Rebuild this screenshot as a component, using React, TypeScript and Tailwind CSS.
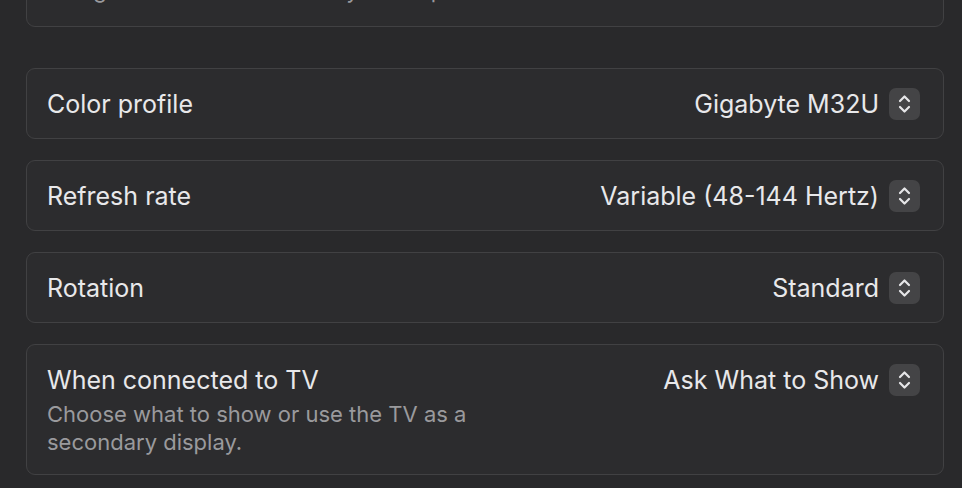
import React from "react";

type Row = {
  label: string;
  value: string;
  note?: string;
};

const rows: Row[] = [
  { label: "Color profile", value: "Gigabyte M32U" },
  { label: "Refresh rate", value: "Variable (48-144 Hertz)" },
  { label: "Rotation", value: "Standard" },
  {
    label: "When connected to TV",
    value: "Ask What to Show",
    note: "Choose what to show or use the TV as a secondary display.",
  },
];

function Stepper() {
  return (
    <span className="flex h-[32px] w-[31px] shrink-0 items-center justify-center rounded-[7px] bg-[#444446]">
      <svg width="15" height="22" viewBox="0 0 15 22" fill="none">
        <path d="M3 8l4.5-4.5L12 8" stroke="#e6e6e8" strokeWidth="2.2" strokeLinecap="round" strokeLinejoin="round" />
        <path d="M3 14l4.5 4.5L12 14" stroke="#e6e6e8" strokeWidth="2.2" strokeLinecap="round" strokeLinejoin="round" />
      </svg>
    </span>
  );
}

export default function App() {
  return (
    <div className="h-[488px] w-full overflow-hidden bg-[#29292b] font-['Inter',sans-serif] text-[#e8e8ea]">
      <div className="mt-[-41px] flex flex-col gap-[41px] pl-[26px] pr-[18px]">
        {/* previous card, scrolled mostly out of view */}
        <div className="flex h-[68px] flex-col justify-end rounded-[9px] border border-[#414143] bg-[#2c2c2e] pb-[22px] pl-[20px]">
          <p className="text-[22px] leading-[28px] text-[#9a9a9d]">Using a scaled resolution may affect performance.</p>
        </div>
        <div className="flex flex-col gap-[21px]">
          {rows.map((r) => (
            <div
              key={r.label}
              className="flex items-start justify-between rounded-[9px] border border-[#414143] bg-[#2c2c2e] pt-[19px] pb-[18px] pl-[20px] pr-[23px]"
            >
              <div className="flex flex-col">
                <span className="text-[25px] leading-[32px]">{r.label}</span>
                {r.note && (
                  <p className="mt-[4px] w-[470px] text-[22px] leading-[28px] text-[#9a9a9d]">{r.note}</p>
                )}
              </div>
              <div className="flex items-center gap-[10px]">
                <span className="text-[25px] leading-[32px]">{r.value}</span>
                <Stepper />
              </div>
            </div>
          ))}
        </div>
      </div>
    </div>
  );
}
